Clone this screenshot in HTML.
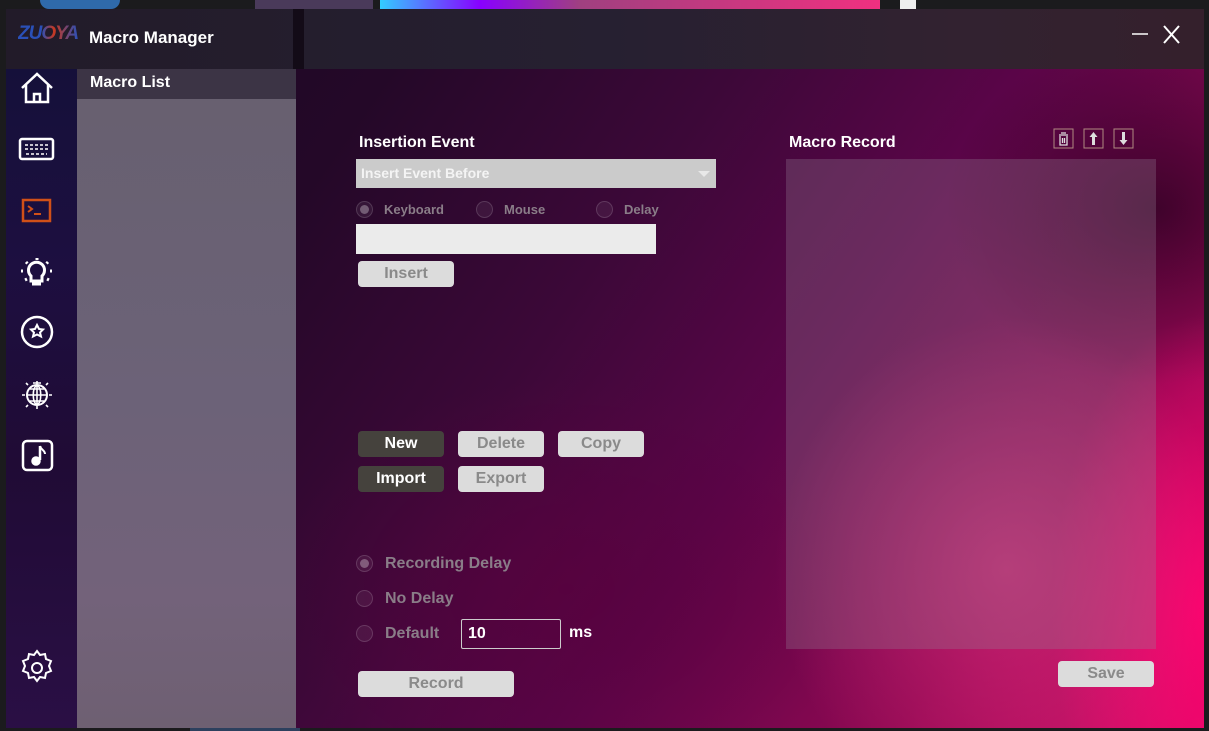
<!DOCTYPE html>
<html><head><meta charset="utf-8"><style>
*{margin:0;padding:0;box-sizing:border-box}
body{width:1209px;height:731px;overflow:hidden;background:#1b1b1d;position:relative;font-family:"Liberation Sans",sans-serif}
.abs{position:absolute}
.win{left:6px;top:9px;width:1198px;height:719px;overflow:hidden;
background:
radial-gradient(ellipse 330px 360px at 1000px 560px,rgba(230,50,130,.6),transparent 70%),
radial-gradient(ellipse 220px 420px at 1200px 600px,rgba(255,0,110,.95),transparent 70%),
radial-gradient(ellipse 300px 250px at 1150px 200px,rgba(20,0,20,.6),transparent 70%),
radial-gradient(ellipse 420px 300px at 560px 580px,rgba(90,0,60,.6),transparent 70%),
linear-gradient(125deg,#1a0822 0%,#240828 25%,#3c0838 45%,#5a0548 62%,#900852 82%,#d8106a 100%);}
.title{left:0;top:0;width:1198px;height:60px;background:linear-gradient(90deg,#221b29,#262031 50%,#322230 80%,#34202c)}
.gap{left:287px;top:0;width:11px;height:60px;background:#130b17}
.side{left:0;top:60px;width:71px;height:659px;background:linear-gradient(180deg,#15103a 0%,#1d0f40 30%,#200b35 60%,#2a0f45 100%)}
.list{left:71px;top:60px;width:219px;height:659px;background:linear-gradient(180deg,#67606f,#6c6278 50%,#73627a 80%,#6e6072)}
.listh{left:71px;top:60px;width:219px;height:30px;background:#3c3445;color:#fff;font-size:16px;font-weight:bold;padding:5px 0 0 13px}
.t{color:#fff;font-size:16px;font-weight:bold}
.btn{position:absolute;height:26px;border-radius:4px;background:#dcdcdc;color:#8a8a8a;font-size:16px;text-align:center;line-height:26px;font-weight:bold}
.dk{background:#45423d;color:#fff}
.rad{position:absolute;width:17px;height:17px;border-radius:50%;border:1px solid rgba(255,255,255,.15);background:rgba(255,255,255,.06)}
.rad.on::after{content:"";position:absolute;left:3px;top:3px;width:9px;height:9px;border-radius:50%;background:rgba(255,255,255,.3)}
.lbl{position:absolute;color:#8a7d88;font-size:16px;font-weight:bold}
.slbl{position:absolute;color:#8a7d88;font-size:13px;font-weight:bold}
</style></head><body>
<div class="abs" style="left:40px;top:0;width:80px;height:9px;background:#2f6aaa;border-radius:0 0 40px 40px"></div>
<div class="abs" style="left:255px;top:0;width:118px;height:9px;background:#4a3a5a"></div>
<div class="abs" style="left:380px;top:0;width:500px;height:9px;background:linear-gradient(90deg,#3cf,#80f 20%,#a04080 40%,#f03080)"></div>
<div class="abs" style="left:900px;top:0;width:16px;height:9px;background:#eee"></div>
<div class="win abs">
<div class="title abs"></div><div class="gap abs"></div>
<div class="abs" style="left:12px;top:14px;font-size:19px;font-style:italic;font-weight:bold;letter-spacing:-1px;background:linear-gradient(90deg,#2a50b8 40%,#c83820 60%,#2a50b8);-webkit-background-clip:text;color:transparent">ZUOYA</div>
<div class="abs t" style="left:83px;top:19px;font-size:17px">Macro Manager</div>
<svg class="abs" style="left:1124px;top:14px" width="50" height="24"><line x1="2" y1="11" x2="18" y2="11" stroke="#fff" stroke-width="1.5"/><line x1="34" y1="3" x2="49" y2="20" stroke="#fff" stroke-width="2"/><line x1="49" y1="3" x2="34" y2="20" stroke="#fff" stroke-width="2"/></svg>
<div class="side abs"></div>
<div class="list abs"></div>
<div class="listh abs">Macro List</div>
<svg class="abs" style="left:0;top:60px" width="71" height="640" fill="none" stroke="#fff" stroke-width="2.5">
<path d="M16 19 L31 5 L46 19 M20 16 V33 H42 V16 M28 33 V25 H34 V33"/>
<rect x="14" y="70" width="33" height="20" rx="2"/><path d="M19 76h23M19 80h23M20 85h21" stroke-dasharray="3 2" stroke-width="1.6"/>
<rect x="17" y="131" width="27" height="21" stroke="#d05018"/><path d="M22 137l4 3-4 3M28 145h7" stroke="#d05018" stroke-width="2"/>
<path d="M25 207a8 8 0 1 1 11 0v5h-11z M26 215h9" stroke-width="3"/><path d="M31 189v2M20 193l1.5 1.5M42 193l-1.5 1.5M15 202h2M46 202h-2M19 211l2-1M43 211l-2-1" stroke-width="3"/>
<circle cx="31" cy="263" r="15"/><path d="M31 256l2 4 4 .5-3 3 1 4-4-2-4 2 1-4-3-3 4-.5z" stroke-width="2"/>
<circle cx="31" cy="326" r="10" stroke-width="2"/><path d="M21 326h20M31 316v20M24 320h14M24 332h14M31 316c-5 3-5 17 0 20M31 316c5 3 5 17 0 20M27 314h8M31 312v3M19 326h-3M43 326h3M22 316l-2-2M40 316l2-2M22 336l-2 2M40 336l2 2M31 337v3" stroke-width="1.6"/>
<rect x="17" y="372" width="29" height="29" rx="4"/><path d="M34 377v14" /><circle cx="30" cy="392" r="3.5" fill="#fff"/><path d="M34 377c1 4 5 4 5 8" stroke-width="2"/>
<path d="M31 582l3 4 5-1 1 5 5 2-2 5 2 5-5 2-1 5-5-1-3 4-3-4-5 1-1-5-5-2 2-5-2-5 5-2 1-5 5 1z" stroke-width="2"/><circle cx="31" cy="599" r="5" stroke-width="2"/>
</svg>
<div class="abs t" style="left:353px;top:125px">Insertion Event</div>
<div class="abs" style="left:350px;top:150px;width:360px;height:29px;background:#cbcbcb;color:#f4f4f4;font-size:14px;font-weight:bold;padding:6px 5px"><span>Insert Event Before</span><span style="position:absolute;right:6px;top:12px;border:6px solid transparent;border-top:6px solid #e8e8e8"></span></div>
<div class="rad on" style="left:350px;top:192px"></div><div class="slbl" style="left:378px;top:193px">Keyboard</div>
<div class="rad" style="left:470px;top:192px"></div><div class="slbl" style="left:498px;top:193px">Mouse</div>
<div class="rad" style="left:590px;top:192px"></div><div class="slbl" style="left:618px;top:193px">Delay</div>
<div class="abs" style="left:350px;top:215px;width:300px;height:30px;background:#ebebeb"></div>
<div class="btn" style="left:352px;top:252px;width:96px;height:26px">Insert</div>
<div class="btn dk" style="left:352px;top:422px;width:86px">New</div>
<div class="btn" style="left:452px;top:422px;width:86px">Delete</div>
<div class="btn" style="left:552px;top:422px;width:86px">Copy</div>
<div class="btn dk" style="left:352px;top:457px;width:86px">Import</div>
<div class="btn" style="left:452px;top:457px;width:86px">Export</div>
<div class="rad on" style="left:350px;top:546px"></div><div class="lbl" style="left:379px;top:546px">Recording Delay</div>
<div class="rad" style="left:350px;top:581px"></div><div class="lbl" style="left:379px;top:581px">No Delay</div>
<div class="rad" style="left:350px;top:616px"></div><div class="lbl" style="left:379px;top:616px">Default</div>
<div class="abs" style="left:455px;top:610px;width:100px;height:30px;border:1px solid #ccc;border-radius:2px;color:#fff;font-size:16px;font-weight:bold;padding:5px 6px">10</div>
<div class="abs t" style="left:563px;top:615px">ms</div>
<div class="btn" style="left:352px;top:662px;width:156px">Record</div>
<div class="abs t" style="left:783px;top:125px">Macro Record</div>
<svg class="abs" style="left:1047px;top:119px" width="82" height="22" fill="none">
<rect x="1" y="1" width="19" height="19" stroke="#b08a80"/><path d="M6 7h9M8 5h5M7 8v9h7V8M9.5 10v5M11.5 10v5" stroke="#ddd" stroke-width="1.3"/>
<rect x="31" y="1" width="19" height="19" stroke="#b08a80"/><path d="M40.5 4l-4 5h2.5v8h3V9h2.5z" fill="#ddd"/>
<rect x="61" y="1" width="19" height="19" stroke="#b08a80"/><path d="M70.5 17l-4-5h2.5V4h3v8h2.5z" fill="#ddd"/>
</svg>
<div class="abs" style="left:780px;top:150px;width:370px;height:490px;background:rgba(150,130,150,.3)"></div>
<div class="btn" style="left:1052px;top:652px;width:96px">Save</div>
</div>
<div class="abs" style="left:190px;top:728px;width:110px;height:3px;background:#3a5a8a;opacity:.6"></div>
</body></html>
